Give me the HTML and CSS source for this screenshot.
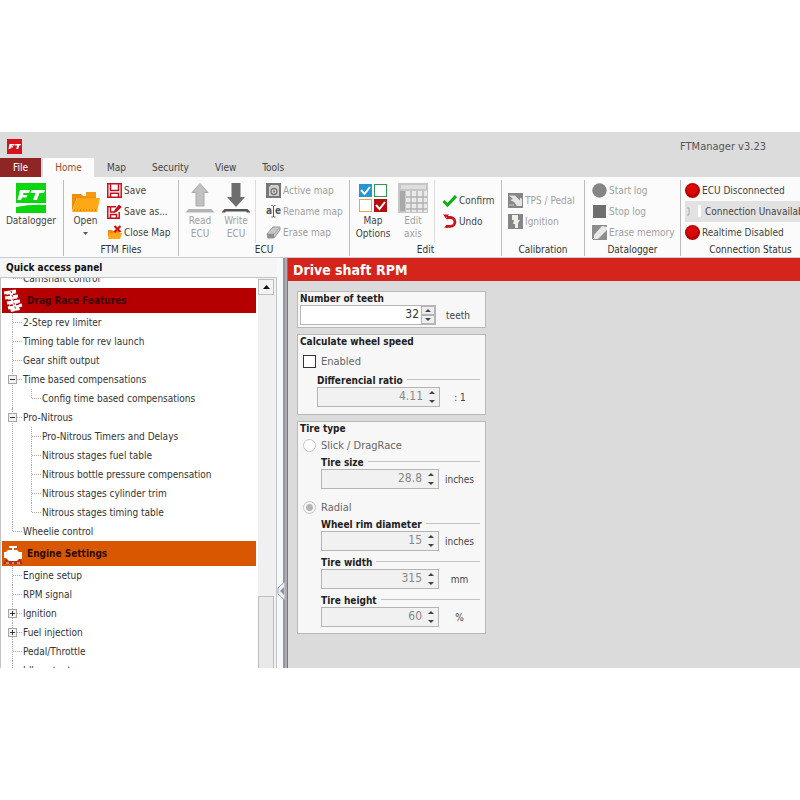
FILE: index.html
```html
<!DOCTYPE html>
<html lang="en">
<head>
  <meta charset="UTF-8">
  <title>FTManager v3.23</title>
  <link rel="stylesheet" href="styles.css">
</head>
<body>
  <div class="app">

    <!-- Title bar -->
    <header class="title-bar">
      <svg class="logo" viewBox="0 0 15 15"><rect width="15" height="15" fill="#d4141c"/><path d="M2.500 5h5.200l-.5 1.500H4.600l-.3.8h1.900l-.4 1.200H3.900L3.300 10H1.500zM8.300 5H14l-.5 1.600h-1.300L11.200 10H9.200l1-3.400H7.800z" fill="#fff"/></svg>
      <span class="app-name">FTManager v3.23</span>
    </header>

    <!-- Tabs -->
    <nav class="tabs">
      <button class="tab file">File</button>
      <button class="tab active">Home</button>
      <button class="tab">Map</button>
      <button class="tab">Security</button>
      <button class="tab">View</button>
      <button class="tab">Tools</button>
    </nav>

    <!-- Ribbon -->
    <div class="ribbon">
      <section class="group datalogger">
        <div class="tools">
          <button class="big">
            <svg viewBox="0 0 30 30"><rect width="30" height="30" fill="#0ad60f"/><path d="M4 7h10l-1 3H7.500l-.5 2h4.500l-1 2.500H6L5 17H1.500zM15.500 7H29l-1 3h-4.500L21 17h-4l2.500-7h-5z" fill="#fff"/><path d="M0 20h30v2Q15 21 0 24z" fill="#fff"/></svg>
            <span>Datalogger</span>
          </button>
        </div>
      </section>

      <section class="group files">
        <div class="tools">
          <button class="big">
            <svg viewBox="0 0 30 30"><path d="M1 28V11h9l2 2h3V9h10v6H6z" fill="#f08c08"/><path d="M15 9h10v5H15z" fill="#f59a12"/><path d="M6 15h23l-3 14H1z" fill="#fda814"/><path d="M3 27h22" stroke="#b96c05" stroke-dasharray="1 2"/></svg>
            <span>Open</span>
            <svg class="caret" viewBox="0 0 5 3"><path d="M0 0h5L2.500 3z" fill="#555"/></svg>
          </button>
          <div class="stack">
            <button class="small">
              <svg viewBox="0 0 15 15"><path d="M.8.800h13.400v13.400H.8zM3.500.8v6.700h8V.8M3.500 14.200v-4h8v4" fill="#fff" stroke="#c1121c" stroke-width="1.500"/></svg>
              Save
            </button>
            <button class="small">
              <svg viewBox="0 0 15 15"><path d="M9 2.800H.8v11.400h11.400V8M3.500 3v5h4M3.500 14v-3.500h6V14" fill="#fff" stroke="#c1121c" stroke-width="1.500"/><path d="M6.500 9l1-3L12 .5 14.800 3 9.500 8z" fill="#c1121c"/></svg>
              Save as...
            </button>
            <button class="small">
              <svg viewBox="0 0 15 15"><path d="M1 5h4l1 1h6v2H3l-2 5z" fill="#f08c08"/><path d="M3 8h12l-2 6H1z" fill="#fda814"/><path d="M7.500 1l6 6M13.500 1l-6 6" stroke="#d01010" stroke-width="2.200"/></svg>
              Close Map
            </button>
          </div>
        </div>
        <h2>FTM Files</h2>
      </section>

      <section class="group ecu">
        <div class="tools">
          <button class="big" disabled>
            <svg viewBox="0 0 30 30"><path d="M15 .5l8 9h-4V23h-8V9.500H7z" fill="#c1c1c1" stroke="#aaa"/><path d="M3.500 26h23l3 3.500h-29z" fill="#b5b5b5"/></svg>
            <span>Read<br>ECU</span>
          </button>
          <button class="big" disabled>
            <svg viewBox="0 0 30 30"><path d="M10.500 0h9v14H24l-9 10-9-10h4.500z" fill="#6d6d6d"/><path d="M3.500 26h23l3 3.500h-4v-1h-21v1h-4z" fill="#555"/></svg>
            <span>Write<br>ECU</span>
          </button>
          <div class="stack divided">
            <button class="small" disabled>
              <svg viewBox="0 0 15 15"><rect width="15" height="15" fill="#777"/><path d="M3 4l2-2h7l1 2v9H3z" fill="#d0d0d0"/><circle cx="8" cy="8.500" r="3" fill="none" stroke="#777" stroke-width="1.300"/><circle cx="8" cy="8.500" r="1" fill="#777"/></svg>
              Active map
            </button>
            <button class="small" disabled>
              <svg viewBox="0 0 15 15"><text x="0" y="10" class="glyph">a</text><text x="9" y="10" class="glyph">e</text><path d="M5.500 1.500h1.200l.8.800.8-.8h1.200M7.500 2v10.500M5.500 13h1.200l.8-.8.8.8h1.200" fill="none" stroke="#555"/></svg>
              Rename map
            </button>
            <button class="small" disabled>
              <svg viewBox="0 0 15 15"><path d="M1 9l6-7h7v3l-6 8H2z" fill="#c8c8c8" stroke="#999"/><path d="M1 9h7l6-7" fill="none" stroke="#aaa"/><path d="M1 9h7v4H2z" fill="#909090"/></svg>
              Erase map
            </button>
          </div>
        </div>
        <h2>ECU</h2>
      </section>

      <section class="group edit">
        <div class="tools">
          <button class="big">
            <svg viewBox="0 0 30 30"><rect x="1" y="1" width="13" height="13" fill="#2496d3"/><rect x="16.500" y="1.500" width="12" height="12" fill="#fff" stroke="#2e9a54"/><rect x="1.500" y="16.500" width="12" height="12" fill="#fff" stroke="#eba83e"/><rect x="16" y="16" width="13" height="13" fill="#b50d10"/><path d="M3 7l3.500 4L12 4M18 22l3.500 4L27 19" fill="none" stroke="#fff" stroke-width="2"/></svg>
            <span>Map<br>Options</span>
          </button>
          <button class="big" disabled>
            <svg viewBox="0 0 30 30"><rect width="30" height="30" fill="#c6c6c6"/><rect x="3" y="2" width="25" height="4" fill="#dedede"/><rect x="2" y="8" width="5" height="20" fill="#a9a9a9"/><path d="M8 8h21v21H8z" fill="#e9e9e9"/><path d="M8 14h21M8 20h21M8 26h21M13 8v21M19 8v21M25 8v21" stroke="#b0b0b0" stroke-width="1.300"/></svg>
            <span>Edit<br>axis</span>
          </button>
          <div class="stack divided lowered">
            <button class="small">
              <svg viewBox="0 0 15 15"><path d="M1.500 8l4 4L14 3" fill="none" stroke="#0dae12" stroke-width="3"/></svg>
              Confirm
            </button>
            <button class="small">
              <svg viewBox="0 0 15 15"><path d="M5 3.500h3.500a4.300 4.300 0 0 1 0 8.800H4" fill="none" stroke="#d01216" stroke-width="2.800"/><path d="M1 .5h6L4.500 3.500 6 7z" fill="#d01216"/><path d="M2 13.500l3-2.500 1 3z" fill="#d01216"/></svg>
              Undo
            </button>
          </div>
        </div>
        <h2>Edit</h2>
      </section>

      <section class="group calibration">
        <div class="tools">
          <div class="stack lowered">
            <button class="small" disabled>
              <svg viewBox="0 0 15 15"><rect width="15" height="15" fill="#868686"/><path d="M1 2.500h6l5 5V5l2 .5V13H9L6 9 2 7l3-1z" fill="#e4e4e4"/><path d="M1 12h5" stroke="#ccc"/></svg>
              TPS / Pedal
            </button>
            <button class="small" disabled>
              <svg viewBox="0 0 15 15"><rect width="15" height="15" fill="#868686"/><path d="M4 1h6v5h2l-2 3v5H7v-4H5l1-4H4z" fill="#eee"/></svg>
              Ignition
            </button>
          </div>
        </div>
        <h2>Calibration</h2>
      </section>

      <section class="group logging">
        <div class="tools">
          <div class="stack">
            <button class="small" disabled>
              <svg viewBox="0 0 15 15"><circle cx="7.500" cy="7.500" r="7.200" fill="#858585"/></svg>
              Start log
            </button>
            <button class="small" disabled>
              <svg viewBox="0 0 15 15"><rect x="1" y="1" width="13" height="13" fill="#6e6e6e"/></svg>
              Stop log
            </button>
            <button class="small" disabled>
              <svg viewBox="0 0 15 15"><rect width="15" height="15" fill="#8d8d8d"/><path d="M2 10l8-9 5 1v3l-9 9H2z" fill="#e8e8e8"/><path d="M0 15l3-3" stroke="#fff"/></svg>
              Erase memory
            </button>
          </div>
        </div>
        <h2>Datalogger</h2>
      </section>

      <section class="group status">
        <div class="tools">
          <div class="stack">
            <div class="small">
              <svg viewBox="0 0 15 15"><circle cx="7.500" cy="7.500" r="7.500" fill="#b40000"/><circle cx="7" cy="6.500" r="5.500" fill="#da0808"/></svg>
              ECU Disconnected
            </div>
            <div class="small unavailable">
              <svg viewBox="0 0 18 15"><path d="M2 4h2v7H2" fill="none" stroke="#aaa"/><path d="M13 1h3v12h-3z" fill="#fff"/></svg>
              Connection Unavailable
            </div>
            <div class="small">
              <svg viewBox="0 0 15 15"><circle cx="7.500" cy="7.500" r="7.500" fill="#b40000"/><circle cx="7" cy="6.500" r="5.500" fill="#da0808"/></svg>
              Realtime Disabled
            </div>
          </div>
        </div>
        <h2>Connection Status</h2>
      </section>
    </div>

    <main class="workspace">

      <!-- Quick access panel -->
      <aside class="panel">
        <h2>Quick access panel</h2>
        <div class="tree-box">
          <div class="tree">
            <ul class="branch">
              <li><a href="#">Camshaft control</a></li>
            </ul>
            <h3 class="drag">
              <svg viewBox="0 0 20 24"><path d="M3 3l9-1 5 19-9 2z" fill="#fff"/><path d="M1 4l12-2M2 9l13-2M4 14l13-2M5 19l14-3" stroke="#fff" stroke-width="3"/><path d="M8 2l5 20" stroke="#b40000" stroke-dasharray="2 2"/><path d="M4 6.500l9-1.500M5 11.500l10-1.500M7 16.500l9-1.500" stroke="#b40000" stroke-width="1.300" stroke-dasharray="3 3"/></svg>
              Drag Race Features
            </h3>
            <ul class="branch">
              <li><a href="#">2-Step rev limiter</a></li>
              <li><a href="#">Timing table for rev launch</a></li>
              <li><a href="#">Gear shift output</a></li>
              <li><button class="toggle minus" aria-label="Collapse"></button><a href="#">Time based compensations</a>
                <ul class="branch">
                  <li><a href="#">Config time based compensations</a></li>
                </ul>
              </li>
              <li><button class="toggle minus" aria-label="Collapse"></button><a href="#">Pro-Nitrous</a>
                <ul class="branch">
                  <li><a href="#">Pro-Nitrous Timers and Delays</a></li>
                  <li><a href="#">Nitrous stages fuel table</a></li>
                  <li><a href="#">Nitrous bottle pressure compensation</a></li>
                  <li><a href="#">Nitrous stages cylinder trim</a></li>
                  <li><a href="#">Nitrous stages timing table</a></li>
                </ul>
              </li>
              <li><a href="#">Wheelie control</a></li>
            </ul>
            <h3 class="engine">
              <svg viewBox="0 0 20 24"><path d="M3 17l-3 5h20l-3-5z" fill="#b5301a"/><path d="M6 4h8v2h-3v2h3l2 2h3v7h-3l-2 2H6l-3-3H1v-6h2l2-2h4V6H6z" fill="#fff"/><path d="M3 21h3M9 21h2M14 21h3" stroke="#e9a58c" stroke-width="1.300"/></svg>
              Engine Settings
            </h3>
            <ul class="branch">
              <li><a href="#">Engine setup</a></li>
              <li><a href="#">RPM signal</a></li>
              <li><button class="toggle plus" aria-label="Expand"></button><a href="#">Ignition</a></li>
              <li><button class="toggle plus" aria-label="Expand"></button><a href="#">Fuel injection</a></li>
              <li><a href="#">Pedal/Throttle</a></li>
              <li><a href="#">Idle actuator</a></li>
            </ul>
          </div>
          <div class="scrollbar">
            <button class="scroll-up" aria-label="Scroll up"><svg viewBox="0 0 7 4"><path d="M0 4h7L3.500 0z" fill="#111"/></svg></button>
            <div class="thumb"></div>
          </div>
        </div>
      </aside>

      <div class="splitter">
        <svg viewBox="0 0 8 20"><path d="M7.500 1L1 7v6l6.500 6" fill="#eef0f4" stroke="#9aa3b5"/><path d="M7 6v8l-4-4z" fill="#8791a8"/></svg>
      </div>

      <!-- Drive shaft form -->
      <form class="content">
        <h1>Drive shaft RPM</h1>
        <div class="cards">
          <fieldset class="card">
            <label class="title" for="teeth">Number of teeth</label>
            <div class="field">
              <div class="spin wide">
                <input id="teeth" type="text" value="32">
                <div class="arrows"><button type="button" class="up" aria-label="Increase"></button><button type="button" class="down" aria-label="Decrease"></button></div>
              </div>
              <span class="unit">teeth</span>
            </div>
          </fieldset>

          <fieldset class="card speed">
            <div class="title">Calculate wheel speed</div>
            <label class="choice"><input type="checkbox"> Enabled</label>
            <div class="sub">
              <label class="caption" for="ratio">Differencial ratio</label>
              <div class="field">
                <div class="spin">
                  <input id="ratio" type="text" value="4.11" disabled>
                  <div class="arrows"><button type="button" class="up" aria-label="Increase" disabled></button><button type="button" class="down" aria-label="Decrease" disabled></button></div>
                </div>
                <span class="unit">: 1</span>
              </div>
            </div>
          </fieldset>

          <fieldset class="card tire">
            <div class="title">Tire type</div>
            <label class="choice"><input type="radio" name="tire" disabled> Slick / DragRace</label>
            <div class="sub">
              <label class="caption" for="size">Tire size</label>
              <div class="field">
                <div class="spin">
                  <input id="size" type="text" value="28.8" disabled>
                  <div class="arrows"><button type="button" class="up" aria-label="Increase" disabled></button><button type="button" class="down" aria-label="Decrease" disabled></button></div>
                </div>
                <span class="unit">inches</span>
              </div>
            </div>
            <label class="choice"><input type="radio" name="tire" checked disabled> Radial</label>
            <div class="sub">
              <label class="caption" for="rim">Wheel rim diameter</label>
              <div class="field">
                <div class="spin">
                  <input id="rim" type="text" value="15" disabled>
                  <div class="arrows"><button type="button" class="up" aria-label="Increase" disabled></button><button type="button" class="down" aria-label="Decrease" disabled></button></div>
                </div>
                <span class="unit">inches</span>
              </div>
              <label class="caption" for="width">Tire width</label>
              <div class="field">
                <div class="spin">
                  <input id="width" type="text" value="315" disabled>
                  <div class="arrows"><button type="button" class="up" aria-label="Increase" disabled></button><button type="button" class="down" aria-label="Decrease" disabled></button></div>
                </div>
                <span class="unit">mm</span>
              </div>
              <label class="caption" for="height">Tire height</label>
              <div class="field">
                <div class="spin">
                  <input id="height" type="text" value="60" disabled>
                  <div class="arrows"><button type="button" class="up" aria-label="Increase" disabled></button><button type="button" class="down" aria-label="Decrease" disabled></button></div>
                </div>
                <span class="unit">%</span>
              </div>
            </div>
          </fieldset>
        </div>
      </form>
    </main>
  </div>
</body>
</html>
```
FILE: styles.css
```css
* {
  box-sizing: border-box;
}

body {
  margin: 0;
  padding: 132px 0;
  height: 100vh;
  background: #fff;
  font-family: 'DejaVu Sans Condensed', 'DejaVu Sans', sans-serif;
  font-size: 10px;
  line-height: 13px;
  color: #444;
}

h1, h2, h3, ul, fieldset {
  margin: 0;
  padding: 0;
}

button, input {
  font: inherit;
  color: inherit;
  margin: 0;
  padding: 0;
  border: none;
  background: none;
}

.app {
  display: flex;
  flex-direction: column;
  height: 100%;
  overflow: hidden;
  background: #dcdcdc;
}

/* Title bar and tabs */
.title-bar {
  display: flex;
  align-items: center;
  justify-content: space-between;
  height: 26px;
  padding: 2px 34px 0 7px;
}

.logo {
  width: 15px;
  height: 15px;
}

.app-name {
  font-size: 11px;
  color: #555;
}

.tabs {
  display: flex;
  height: 19px;
}

.tab {
  padding: 0 13px;
}

.tab.file {
  width: 41px;
  padding: 0;
  margin-right: 2px;
  background: #8e2626;
  color: #fff;
}

.tab.active {
  width: 51px;
  padding: 0;
  background: #fcfcfc;
  color: #9a4a2c;
}

/* Ribbon */
.ribbon {
  display: flex;
  flex-shrink: 0;
  height: 81px;
  padding: 3px 0 1px;
  background: #fbfbfb;
  border-bottom: 1px solid #c9ccd2;
}

.group {
  display: flex;
  flex-direction: column;
  flex-shrink: 0;
  border-right: 1px solid #bcbcbc;
}

.group h2 {
  font-size: 10px;
  font-weight: normal;
  text-align: center;
  color: #333;
}

.tools {
  display: flex;
  flex-shrink: 0;
  height: 63px;
}

.datalogger { width: 64px; }
.files { width: 115px; }
.ecu { width: 171px; }
.edit { width: 152px; }
.calibration { width: 83px; }
.logging { width: 96px; }

.status {
  width: 139px;
  border-right: none;
}

.big {
  display: flex;
  flex-direction: column;
  align-items: center;
  gap: 1px;
  padding-top: 3px;
}

.big svg {
  width: 30px;
  height: 30px;
}

.big .caret {
  width: 5px;
  height: 3px;
  margin-top: 4px;
}

.datalogger .big { width: 62px; }
.files .big { width: 43px; }

.ecu .tools { padding-left: 3px; }
.ecu .big { width: 36px; }

.edit .tools { padding-left: 3px; }
.edit .big { width: 40px; }

button:disabled {
  color: #a0a0a0;
}

.stack {
  display: flex;
  flex-direction: column;
}

.stack.lowered {
  padding-top: 10px;
}

.stack.divided {
  border-left: 1px solid #dedede;
  margin-left: 1px;
  padding-left: 10px;
}

.edit .stack.divided {
  padding-left: 7px;
}

.calibration .stack {
  padding-left: 6px;
}

.logging .stack {
  padding-left: 7px;
}

.status .stack {
  flex: 1;
  padding-left: 4px;
}

.small {
  display: flex;
  align-items: center;
  gap: 2px;
  height: 21px;
  white-space: nowrap;
}

.small svg {
  width: 15px;
  height: 15px;
  flex-shrink: 0;
}

.small.unavailable {
  background: #e2e2e2;
}

.unavailable svg {
  width: 18px;
}

.glyph {
  font-size: 10px;
  font-weight: bold;
  fill: #555;
}

/* Quick access panel */
.workspace {
  display: flex;
  flex: 1;
  min-height: 0;
}

.panel {
  display: flex;
  flex-direction: column;
  width: 277px;
  background: #f5f5f5;
}

.panel h2 {
  height: 19px;
  padding: 3px 6px;
  font-size: 10px;
  color: #111;
}

.tree-box {
  display: flex;
  flex: 1;
  min-height: 0;
  border: 1px solid #c4c4c4;
  border-bottom: none;
  background: #fff;
}

.tree {
  flex: 1;
  min-width: 0;
  overflow: hidden;
  padding: 0 2px 0 1px;
}

.tree > .branch:first-child {
  margin-top: -9px;
}

.tree h3 {
  display: flex;
  align-items: center;
  gap: 4px;
  height: 25px;
  padding-left: 1px;
  font-size: 10px;
}

.tree h3 svg {
  width: 20px;
  height: 24px;
}

.drag {
  background: #b40000;
  color: #3f0000;
}

.engine {
  background: #d95700;
  color: #2b0c00;
}

.branch {
  list-style: none;
  padding-left: 10px;
}

.branch .branch {
  padding-left: 19px;
}

.branch li {
  position: relative;
}

/* dotted trunk and twig */
.branch li::before {
  content: "";
  position: absolute;
  left: 0;
  top: 0;
  bottom: 0;
  border-left: 1px dotted #a8a8a8;
}

.branch li::after {
  content: "";
  position: absolute;
  left: 1px;
  top: 9px;
  width: 9px;
  border-top: 1px dotted #a8a8a8;
}

.branch li:last-child::before {
  bottom: auto;
  height: 9px;
}

.branch a {
  display: block;
  padding: 3px 0 3px 11px;
  color: #333;
  text-decoration: none;
  white-space: nowrap;
}

.toggle {
  position: absolute;
  left: -4px;
  top: 5px;
  z-index: 1;
  width: 9px;
  height: 9px;
  border: 1px solid #a5a5a5;
  background: linear-gradient(#333, #333) center / 5px 1px no-repeat, #f2f2f2;
}

.toggle.plus {
  background: linear-gradient(#333, #333) center / 5px 1px no-repeat, linear-gradient(#333, #333) center / 1px 5px no-repeat, #f2f2f2;
}

.scrollbar {
  display: flex;
  flex-direction: column;
  justify-content: space-between;
  width: 18px;
  padding-right: 2px;
  background: #f0f0f0;
}

.scroll-up {
  display: flex;
  align-items: center;
  justify-content: center;
  height: 16px;
  margin-top: 1px;
  border: 1px solid #bdbdbd;
  background: #f3f3f3;
}

.scroll-up svg {
  width: 7px;
  height: 4px;
}

.thumb {
  height: 72px;
  border: 1px solid #bdbdbd;
  border-bottom: none;
  background: #e9e9e9;
}

.splitter {
  display: flex;
  align-items: flex-start;
  width: 11px;
  padding-top: 323px;
  background: linear-gradient(90deg, #f7f8fb 0 6px, #96969c 6px 8px, #acacb2 8px 10px, #77777c 10px);
}

.splitter svg {
  width: 8px;
  height: 20px;
}

/* Drive shaft form */
.content {
  flex: 1;
  background: #dbdbdb;
}

.content h1 {
  height: 23px;
  padding: 4px 5px;
  background: #d5241b;
  color: #fff;
  font-size: 14px;
  line-height: 16px;
}

.cards {
  display: flex;
  flex-direction: column;
  gap: 6px;
  width: 198px;
  padding: 10px 0 0 9px;
}

.card {
  min-width: 0;
  padding: 0 5px 2px 2px;
  border: 1px solid #b9b9b9;
  background: #f7f7f7;
}

.card.speed {
  padding-bottom: 7px;
}

.card.tire {
  padding-bottom: 6px;
}

.title {
  display: block;
  font-weight: bold;
  color: #222;
}

.choice {
  display: flex;
  align-items: center;
  gap: 5px;
  height: 21px;
  padding-left: 3px;
  font-size: 11px;
  color: #666;
}

.speed .choice {
  margin: 3px 0 2px;
}

.sub + .choice {
  margin-top: 8px;
}

.choice input {
  appearance: none;
  width: 13px;
  height: 13px;
  border: 1px solid #333;
  background: #fff;
}

.choice input[type="radio"] {
  border-color: #c4c4c4;
  border-radius: 50%;
}

.choice input[type="radio"]:checked {
  background: radial-gradient(#b5b5b5 0 3px, #f7f7f7 4px);
}

.sub {
  padding-left: 21px;
}

.speed .sub {
  padding-left: 17px;
}

.caption {
  display: flex;
  gap: 4px;
  font-weight: bold;
  color: #222;
}

.caption::after {
  content: "";
  flex: 1;
  height: 1px;
  margin-top: 5px;
  background: #c2c2c2;
}

.field {
  display: flex;
  align-items: center;
}

.field + .caption {
  margin-top: 5px;
}

.spin {
  display: flex;
  width: 118px;
  height: 20px;
  border: 1px solid #b5b5b5;
  background: #f1f1f1;
}

.speed .spin {
  width: 123px;
}

.spin.wide {
  width: 136px;
  background: #fff;
}

.spin input {
  flex: 1;
  min-width: 0;
  padding: 0 2px 2px 0;
  font-size: 12px;
  text-align: right;
  color: #333;
}

.spin input:disabled {
  color: #888;
}

.arrows {
  display: flex;
  flex-direction: column;
  width: 14px;
}

.arrows button {
  display: flex;
  flex: 1;
  align-items: center;
  justify-content: center;
}

.wide .arrows button {
  border: 1px solid #b5b5b5;
  background: #eee;
}

.arrows button::before {
  content: "";
  border: 3px solid transparent;
  border-top-width: 0;
  border-bottom-color: #444;
}

.arrows .down::before {
  border-top: 3px solid #444;
  border-bottom: none;
}

.unit {
  flex: 1;
  text-align: center;
}
```
